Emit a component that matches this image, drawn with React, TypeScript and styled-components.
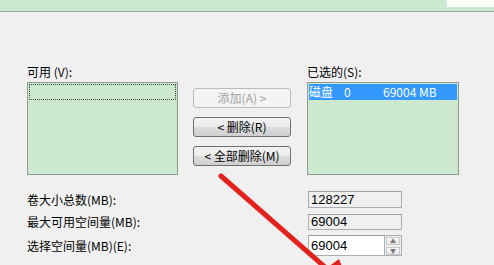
import styled, { createGlobalStyle } from "styled-components";

const GlobalStyle = createGlobalStyle`
  html, body {
    margin: 0;
    padding: 0;
    background: #f0f0f0;
  }
  body {
    font-family: "Noto Sans CJK SC", "Liberation Sans", sans-serif;
    font-size: 12px;
    color: #000;
  }
`;

const Page = styled.div`
  position: relative;
  width: 494px;
  height: 265px;
  overflow: hidden;
  background: #f0f0f0;
`;

const TopBand = styled.div`
  height: 11px;
  background: #cce8cf;
  border-bottom: 1px solid #98a898;
  display: flex;
  justify-content: flex-end;
  align-items: flex-start;
`;

const WhitePatch = styled.div`
  width: 47px;
  height: 7px;
  background: #fbfdfb;
`;

const Body = styled.div`
  padding: 52px 0 0 27px;
`;

const ListsRow = styled.div`
  display: flex;
  align-items: flex-start;
`;

const Column = styled.div<{ $w: number }>`
  width: ${(p) => p.$w}px;
  display: flex;
  flex-direction: column;
`;

const Label = styled.div`
  height: 16px;
  line-height: 16px;
  margin-bottom: 2px;
  white-space: nowrap;
`;

const ListBox = styled.div<{ $h: number }>`
  height: ${(p) => p.$h}px;
  background: #cce8cf;
  border: 1px solid #8f9a90;
  box-sizing: border-box;
  padding: 1px;
`;

const FocusRow = styled.div`
  height: 16px;
  border: 1px dotted #444;
  box-sizing: border-box;
`;

const SelectedRow = styled.div`
  height: 16px;
  line-height: 16px;
  background: #3399ff;
  color: #fff;
  display: grid;
  grid-template-columns: 35px 39px auto;
  white-space: nowrap;
`;

const ButtonColumn = styled.div`
  display: flex;
  flex-direction: column;
  gap: 9px;
  margin: 24px 16px 0 15px;
`;

const Button = styled.button<{ $disabled?: boolean }>`
  width: 98px;
  height: 20px;
  padding: 0;
  font: inherit;
  font-size: 12px;
  line-height: 18px;
  border-radius: 3px;
  border: 1px solid ${(p) => (p.$disabled ? "#b9bcbe" : "#707070")};
  background: ${(p) =>
    p.$disabled
      ? "#f4f4f4"
      : "linear-gradient(#f2f2f2 0%, #ebebeb 50%, #dddddd 51%, #cfcfcf 100%)"};
  color: ${(p) => (p.$disabled ? "#a3a3a3" : "#000")};
  white-space: nowrap;
`;

const Fields = styled.div`
  display: grid;
  grid-template-columns: 281px 94px;
  row-gap: 5px;
  margin-top: 16px;
  align-items: center;
`;

const FieldLabel = styled.div`
  white-space: nowrap;
`;

const TextBox = styled.div<{ $editable?: boolean; $h: number }>`
  height: ${(p) => p.$h}px;
  box-sizing: border-box;
  border: 1px solid #abadb3;
  border-top-color: #9a9ea6;
  background: ${(p) => (p.$editable ? "#ffffff" : "#f0f0f0")};
  display: flex;
  align-items: center;
  padding-left: 2px;
  font-family: "Liberation Sans", sans-serif;
  font-size: 13px;
`;

const SpinWrap = styled.div`
  display: flex;
  height: 21px;
`;

const SpinButtons = styled.div`
  width: 17px;
  display: flex;
  flex-direction: column;
  border: 1px solid #abadb3;
  border-left: none;
  box-sizing: border-box;
  background: #f0f0f0;
`;

const SpinBtn = styled.div`
  flex: 1;
  display: flex;
  align-items: center;
  justify-content: center;
  background: linear-gradient(#fafafa, #e2e2e2);
  border: 1px solid #c8c8c8;
  margin: 1px;
  font-size: 6px;
  color: #7a7a7a;
  line-height: 1;
`;

const Arrow = styled.svg`
  position: absolute;
  left: 0;
  top: 0;
  pointer-events: none;
`;

export default function App() {
  return (
    <Page>
      <GlobalStyle />
      <TopBand>
        <WhitePatch />
      </TopBand>
      <Body>
        <ListsRow>
          <Column $w={151}>
            <Label>可用 (V):</Label>
            <ListBox $h={93}>
              <FocusRow />
            </ListBox>
          </Column>
          <ButtonColumn>
            <Button $disabled>添加(A) &gt;</Button>
            <Button>&lt; 删除(R)</Button>
            <Button>&lt; 全部删除(M)</Button>
          </ButtonColumn>
          <Column $w={152}>
            <Label>已选的(S):</Label>
            <ListBox $h={93}>
              <SelectedRow>
                <span>磁盘</span>
                <span>0</span>
                <span>69004 MB</span>
              </SelectedRow>
            </ListBox>
          </Column>
        </ListsRow>
        <Fields>
          <FieldLabel>卷大小总数(MB):</FieldLabel>
          <TextBox $h={17}>128227</TextBox>
          <FieldLabel>最大可用空间量(MB):</FieldLabel>
          <TextBox $h={16}>69004</TextBox>
          <FieldLabel>选择空间量(MB)(E):</FieldLabel>
          <SpinWrap>
            <TextBox $editable $h={21} style={{ flex: 1 }}>
              69004
            </TextBox>
            <SpinButtons>
              <SpinBtn>▲</SpinBtn>
              <SpinBtn>▼</SpinBtn>
            </SpinButtons>
          </SpinWrap>
        </Fields>
      </Body>
      <Arrow width="494" height="265" viewBox="0 0 494 265">
        <line
          x1="221"
          y1="176"
          x2="326"
          y2="268"
          stroke="#e2231d"
          strokeWidth="5"
          strokeLinecap="round"
        />
        <polygon points="352,292 313,278 339,259" fill="#e2231d" />
      </Arrow>
    </Page>
  );
}
